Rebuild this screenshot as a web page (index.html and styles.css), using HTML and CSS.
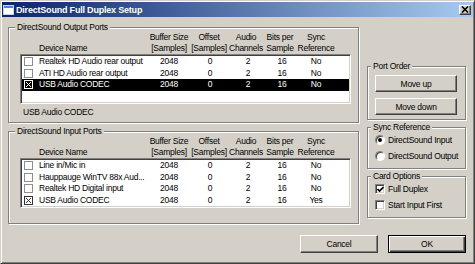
FILE: index.html
```html
<!DOCTYPE html>
<html lang="en">
<head>
    <meta charset="UTF-8">
    <title>DirectSound Full Duplex Setup</title>
    <link rel="stylesheet" href="styles.css">
</head>
<body>
    <div class="window">
        <div class="titlebar">
            <svg class="app-icon" width="11" height="10" viewBox="0 0 11 10">
                <rect x="0.5" y="0.5" width="10" height="9" fill="#fff" stroke="#c8d4e8"/>
                <rect x="1" y="1" width="9" height="2" fill="#5a7ed0"/>
            </svg>
            <span class="title">DirectSound Full Duplex Setup</span>
            <span class="close-btn">
                <svg width="8" height="7" viewBox="0 0 8 7">
                    <path d="M1 0.5l6 6M7 0.5l-6 6" stroke="#000" stroke-width="1.6"/>
                </svg>
            </span>
        </div>

        <div class="main">
            <div class="left-col">
                <fieldset class="group">
                    <legend>DirectSound Output Ports</legend>
                    <div class="port-head">
                        <span class="col-name">Device Name</span>
                        <span>Buffer Size<br>[Samples]</span>
                        <span>Offset<br>[Samples]</span>
                        <span>Audio<br>Channels</span>
                        <span>Bits per<br>Sample</span>
                        <span>Sync<br>Reference</span>
                    </div>
                    <div class="port-list">
                        <div class="port-row">
                            <span class="col-name"><svg class="lbox" width="9" height="9" viewBox="0 0 9 9"><rect x="0.5" y="0.5" width="8" height="8" fill="none" stroke="currentColor"/></svg>Realtek HD Audio rear output</span>
                            <span>2048</span><span>0</span><span>2</span><span>16</span><span>No</span>
                        </div>
                        <div class="port-row">
                            <span class="col-name"><svg class="lbox" width="9" height="9" viewBox="0 0 9 9"><rect x="0.5" y="0.5" width="8" height="8" fill="none" stroke="currentColor"/></svg>ATI HD Audio rear output</span>
                            <span>2048</span><span>0</span><span>2</span><span>16</span><span>No</span>
                        </div>
                        <div class="port-row selected">
                            <span class="col-name"><svg class="lbox on" width="9" height="9" viewBox="0 0 9 9"><rect x="0.5" y="0.5" width="8" height="8" fill="none" stroke="currentColor"/><path d="M2 2l5 5M7 2l-5 5" stroke="currentColor"/></svg>USB Audio CODEC</span>
                            <span>2048</span><span>0</span><span>2</span><span>16</span><span>No</span>
                        </div>
                    </div>
                    <div class="current-port">USB Audio CODEC</div>
                </fieldset>

                <fieldset class="group inputs">
                    <legend>DirectSound Input Ports</legend>
                    <div class="port-head">
                        <span class="col-name">Device Name</span>
                        <span>Buffer Size<br>[Samples]</span>
                        <span>Offset<br>[Samples]</span>
                        <span>Audio<br>Channels</span>
                        <span>Bits per<br>Sample</span>
                        <span>Sync<br>Reference</span>
                    </div>
                    <div class="port-list">
                        <div class="port-row">
                            <span class="col-name"><svg class="lbox" width="9" height="9" viewBox="0 0 9 9"><rect x="0.5" y="0.5" width="8" height="8" fill="none" stroke="currentColor"/></svg>Line in/Mic in</span>
                            <span>2048</span><span>0</span><span>2</span><span>16</span><span>No</span>
                        </div>
                        <div class="port-row">
                            <span class="col-name"><svg class="lbox" width="9" height="9" viewBox="0 0 9 9"><rect x="0.5" y="0.5" width="8" height="8" fill="none" stroke="currentColor"/></svg>Hauppauge WinTV 88x Aud...</span>
                            <span>2048</span><span>0</span><span>2</span><span>16</span><span>No</span>
                        </div>
                        <div class="port-row">
                            <span class="col-name"><svg class="lbox" width="9" height="9" viewBox="0 0 9 9"><rect x="0.5" y="0.5" width="8" height="8" fill="none" stroke="currentColor"/></svg>Realtek HD Digital input</span>
                            <span>2048</span><span>0</span><span>2</span><span>16</span><span>No</span>
                        </div>
                        <div class="port-row">
                            <span class="col-name"><svg class="lbox on" width="9" height="9" viewBox="0 0 9 9"><rect x="0.5" y="0.5" width="8" height="8" fill="none" stroke="currentColor"/><path d="M2 2l5 5M7 2l-5 5" stroke="currentColor"/></svg>USB Audio CODEC</span>
                            <span>2048</span><span>0</span><span>2</span><span>16</span><span>Yes</span>
                        </div>
                    </div>
                </fieldset>
            </div>

            <div class="right-col">
                <fieldset class="group side port-order">
                    <legend>Port Order</legend>
                    <button class="btn wide">Move up</button>
                    <button class="btn wide">Move down</button>
                </fieldset>

                <fieldset class="group side sync-ref">
                    <legend>Sync Reference</legend>
                    <div class="opt"><span class="radio checked"></span>DirectSound Input</div>
                    <div class="opt"><span class="radio"></span>DirectSound Output</div>
                </fieldset>

                <fieldset class="group side card-opts">
                    <legend>Card Options</legend>
                    <div class="opt">
                        <span class="check">
                            <svg width="7" height="7" viewBox="0 0 7 7"><path d="M0.5 3l2 2 4-4" fill="none" stroke="#000" stroke-width="1.6"/></svg>
                        </span>Full Duplex
                    </div>
                    <div class="opt"><span class="check"></span>Start Input First</div>
                </fieldset>
            </div>
        </div>

        <div class="footer">
            <button class="btn">Cancel</button>
            <button class="btn default">OK</button>
        </div>
    </div>
</body>
</html>
```

FILE: styles.css
```css
body {
    margin: 0;
    font-family: "Liberation Sans", Arial, sans-serif;
    font-size: 8.5px;
    letter-spacing: -0.25px;
    color: #000;
    background: #d4d0c8;
}

.window {
    width: 475px;
    height: 264px;
    box-sizing: border-box;
    padding: 1px;
    display: flex;
    flex-direction: column;
    background: #d4d0c8;
    border: 1px solid;
    border-color: #d4d0c8 #404040 #404040 #d4d0c8;
    box-shadow: inset 1px 1px #fff, inset -1px -1px #808080;
}

/* title bar */
.titlebar {
    height: 15px;
    display: flex;
    align-items: center;
    padding: 0 2px 0 1px;
    background: linear-gradient(to right, #0a246a, #a6caf0);
    color: #fff;
}
.app-icon {
    flex: none;
}
.title {
    margin-left: 2px;
    font-size: 9px;
    font-weight: bold;
    letter-spacing: -0.2px;
}
.close-btn {
    margin-left: auto;
    width: 12px;
    height: 10px;
    box-sizing: border-box;
    display: flex;
    align-items: center;
    justify-content: center;
    background: #d4d0c8;
    border: 1px solid;
    border-color: #fff #404040 #404040 #fff;
    box-shadow: inset -1px -1px #808080;
}

/* layout */
.main {
    display: flex;
    gap: 8px;
    padding: 5px 0 0 6px;
}
.left-col {
    width: 351px;
    display: flex;
    flex-direction: column;
    gap: 3px;
}
.right-col {
    width: 99px;
    margin-top: 39px;
    display: flex;
    flex-direction: column;
    gap: 2px;
}

/* group boxes */
.group {
    margin: 0;
    min-width: 0;
    padding: 0 7px 4px 11px;
    border: 1px solid #808080;
    box-shadow: 1px 1px 0 #fff, inset 1px 1px 0 #fff;
}
.group legend {
    margin-left: -5px;
    padding: 0 2px;
    line-height: 10px;
    background: #d4d0c8;
}
.group.inputs {
    padding-bottom: 15px;
}
.group.side {
    padding: 0 8px 4px 7px;
}
.group.side legend {
    margin-left: -4px;
}

/* port tables */
.port-head,
.port-row {
    display: grid;
    align-items: end;
    text-align: center;
}
.port-head {
    grid-template-columns: 126px 42px 38px 36px 32px 40px;
    padding-left: 2px;
    margin-bottom: 1px;
    line-height: 10.5px;
}
.port-head .col-name {
    text-align: left;
    padding-left: 17px;
}
.port-list {
    height: 50px;
    box-sizing: border-box;
    background: #fff;
    border: 1px solid;
    border-color: #808080 #fff #fff #808080;
    box-shadow: inset 1px 1px #404040, inset -1px -1px #d4d0c8;
    padding: 1px;
}
.port-row {
    grid-template-columns: 128px 38px 44px 32px 36px 32px;
    align-items: center;
    height: 11.5px;
    line-height: 11.5px;
}
.port-row .col-name {
    display: flex;
    align-items: center;
    text-align: left;
    padding-left: 2px;
    white-space: nowrap;
}
.port-row.selected {
    background: #000;
    color: #fff;
}
.lbox {
    flex: none;
    margin-right: 6px;
    color: #8e8e8e;
}
.lbox.on {
    color: #333;
}
.selected .lbox {
    color: #fff;
}
.current-port {
    margin-top: 3px;
    padding-left: 3px;
    line-height: 11px;
}

/* buttons */
.btn {
    width: 78px;
    height: 18px;
    padding: 0;
    font: inherit;
    letter-spacing: inherit;
    color: #000;
    background: #d4d0c8;
    border: 1px solid;
    border-color: #fff #404040 #404040 #fff;
    box-shadow: inset -1px -1px #808080;
}
.btn.wide {
    display: block;
    width: 82px;
    height: 17px;
    margin-top: 4px;
}
.btn.wide + .btn.wide {
    margin-top: 6px;
}
.port-order {
    padding-bottom: 7px;
}
.btn.default {
    border-color: #000;
    box-shadow: inset 1px 1px #fff, inset -1px -1px #404040, inset -2px -2px #808080;
}

/* radios and checks */
.opt {
    display: flex;
    align-items: center;
    height: 16px;
    white-space: nowrap;
}
.card-opts {
    padding-top: 3px;
}
.radio {
    flex: none;
    width: 10px;
    height: 10px;
    margin-right: 3px;
    box-sizing: border-box;
    border-radius: 50%;
    background: #fff;
    border: 1px solid;
    border-color: #808080 #fff #fff #808080;
    box-shadow: inset 1px 1px #404040;
    display: flex;
    align-items: center;
    justify-content: center;
}
.radio.checked::after {
    content: "";
    width: 4px;
    height: 4px;
    border-radius: 50%;
    background: #000;
}
.check {
    flex: none;
    width: 10px;
    height: 10px;
    margin-right: 3px;
    box-sizing: border-box;
    background: #fff;
    border: 1px solid;
    border-color: #808080 #fff #fff #808080;
    box-shadow: inset 1px 1px #404040, inset -1px -1px #d4d0c8;
    display: flex;
    align-items: center;
    justify-content: center;
}

/* footer */
.footer {
    display: flex;
    justify-content: flex-end;
    gap: 10px;
    padding: 11px 7px 0 0;
}
```
